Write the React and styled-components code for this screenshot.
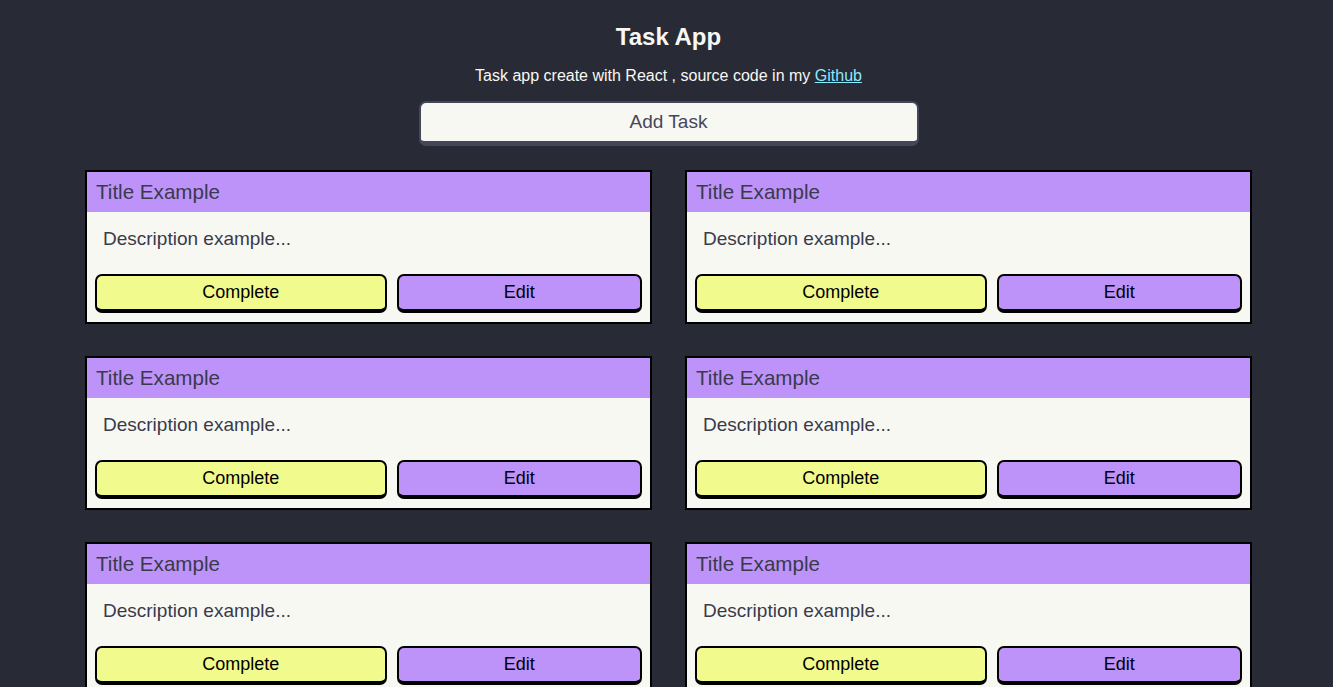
import React from "react";
import styled, { createGlobalStyle } from "styled-components";

const GlobalStyle = createGlobalStyle`
  body {
    margin: 0;
    background-color: #282a36;
    font-family: "Liberation Sans", Arial, sans-serif;
  }
`;

const Page = styled.div`
  padding-left: 4px;
  display: flex;
  flex-direction: column;
  align-items: center;
`;

const Title = styled.h1`
  margin: 22px 0 0;
  font-size: 24px;
  line-height: 30px;
  color: #f8f8f2;
`;

const Subtitle = styled.p`
  margin: 15px 0 0;
  font-size: 16px;
  line-height: 18px;
  color: #f8f8f2;

  a {
    color: #8be9fd;
  }
`;

const AddButton = styled.button`
  margin-top: 16px;
  width: 500px;
  height: 45px;
  background-color: #f8f8f2;
  border: 2px solid #44475a;
  border-bottom-width: 5px;
  border-radius: 7px;
  font-family: inherit;
  font-size: 19px;
  color: #44475a;
  cursor: pointer;
`;

const Grid = styled.div`
  margin-top: 24px;
  width: 1167px;
  display: grid;
  grid-template-columns: 1fr 1fr;
  column-gap: 33px;
  row-gap: 32px;
`;

const Card = styled.div`
  border: 2px solid #000;
  background-color: #f8f8f2;
`;

const CardHeader = styled.div`
  height: 40px;
  padding-left: 9px;
  display: flex;
  align-items: center;
  background-color: #bd93f9;
  font-size: 20.6px;
  color: #393a4c;
`;

const Description = styled.p`
  margin: 0;
  padding: 16px 16px 0;
  font-size: 19px;
  line-height: 22px;
  color: #393a4c;
`;

const Actions = styled.div`
  display: flex;
  gap: 10px;
  padding: 24px 8px 9px;
`;

const ActionButton = styled.button`
  flex: 1 1 auto;
  height: 39px;
  background-color: ${(props) => (props.variant === "edit" ? "#bd93f9" : "#f1fa8c")};
  border: 2px solid #000;
  border-bottom-width: 4px;
  border-radius: 7px;
  font-family: inherit;
  font-size: 18px;
  color: #000;
  cursor: pointer;
`;

const tasks = Array.from({ length: 6 }, (_, i) => ({
  id: i,
  title: "Title Example",
  description: "Description example...",
}));

const App = () => {
  return (
    <Page>
      <GlobalStyle />
      <Title>Task App</Title>
      <Subtitle>
        Task app create with React , source code in my <a href="#github">Github</a>
      </Subtitle>
      <AddButton>Add Task</AddButton>
      <Grid>
        {tasks.map((task) => (
          <Card key={task.id}>
            <CardHeader>{task.title}</CardHeader>
            <Description>{task.description}</Description>
            <Actions>
              <ActionButton>Complete</ActionButton>
              <ActionButton variant='edit'>Edit</ActionButton>
            </Actions>
          </Card>
        ))}
      </Grid>
    </Page>
  );
};

export default App;
